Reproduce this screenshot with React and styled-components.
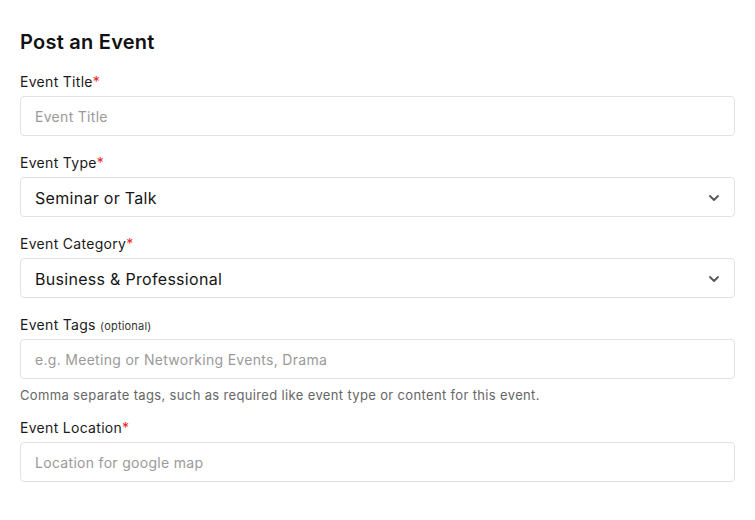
import styled, { createGlobalStyle } from "styled-components";

const GlobalStyle = createGlobalStyle`
  * { box-sizing: border-box; }
  body {
    margin: 0;
    background: #ffffff;
    font-family: Inter, "Noto Sans", sans-serif;
    color: #111111;
  }
`;

const Page = styled.div`
  padding: 27px 20px 20px;
`;

const Heading = styled.h2`
  margin: 0 0 14px;
  font-size: 20px;
  line-height: 30px;
  font-weight: 600;
  letter-spacing: 0.25px;
  color: #111;
`;

const Field = styled.div`
  display: flex;
  flex-direction: column;
  margin-bottom: ${(p) => (p.tight ? "0" : "16px")};
`;

const Label = styled.label`
  font-size: 14px;
  line-height: 21px;
  height: 21px;
  margin-bottom: 4px;
  letter-spacing: 0.3px;
  color: #1a1a1a;
`;

const Req = styled.span`
  color: #ee1c1c;
`;

const Optional = styled.span`
  font-size: 11px;
  line-height: 1;
  letter-spacing: 0.2px;
  color: #333;
`;

const Input = styled.input`
  width: 100%;
  height: 40px;
  border: 1px solid #e2e2e2;
  border-radius: 4px;
  padding: 0 14px;
  font-family: inherit;
  font-size: 14px;
  letter-spacing: 0.3px;
  color: #222;
  outline: none;
  &::placeholder {
    color: #9a9a9a;
  }
`;

const SelectBox = styled.div`
  height: 40px;
  border: 1px solid #e2e2e2;
  border-radius: 4px;
  display: flex;
  align-items: center;
  padding: 1px 14px 0;
  font-size: 16px;
  letter-spacing: 0.3px;
  color: #151515;
`;

const Chevron = styled.svg`
  margin-left: auto;
  width: 12px;
  height: 12px;
`;

const Help = styled.p`
  margin: 6px 0 12px;
  font-size: 13px;
  line-height: 20px;
  letter-spacing: 0.35px;
  color: #666;
`;

const Select = ({ value }) => (
  <SelectBox>
    {value}
    <Chevron viewBox="0 0 12 12" fill="none">
      <path d="M2 4l4 4 4-4" stroke="#555" strokeWidth="1.8" strokeLinecap="round" strokeLinejoin="round" />
    </Chevron>
  </SelectBox>
);

export default function App() {
  return (
    <Page>
      <GlobalStyle />
      <Heading>Post an Event</Heading>
      <Field>
        <Label>Event Title<Req>*</Req></Label>
        <Input placeholder="Event Title" />
      </Field>
      <Field>
        <Label>Event Type<Req>*</Req></Label>
        <Select value="Seminar or Talk" />
      </Field>
      <Field>
        <Label>Event Category<Req>*</Req></Label>
        <Select value="Business & Professional" />
      </Field>
      <Field tight>
        <Label>Event Tags <Optional>(optional)</Optional></Label>
        <Input placeholder="e.g. Meeting or Networking Events, Drama" />
      </Field>
      <Help>Comma separate tags, such as required like event type or content for this event.</Help>
      <Field>
        <Label>Event Location<Req>*</Req></Label>
        <Input placeholder="Location for google map" />
      </Field>
    </Page>
  );
}
